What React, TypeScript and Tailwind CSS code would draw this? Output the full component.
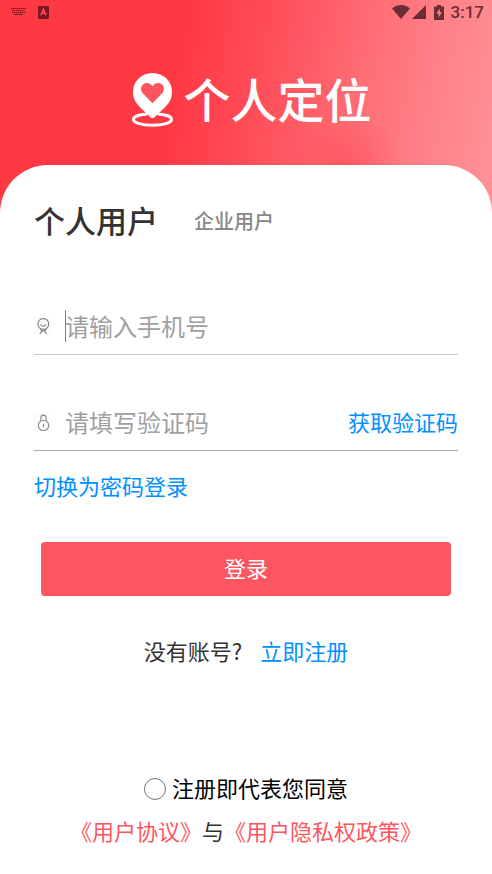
import { useState } from 'react'

const tabs = [
  { id: 'personal', label: '个人用户' },
  { id: 'company', label: '企业用户' },
]

function StatusBar() {
  return (
    <div className="flex h-6 items-center justify-between pl-[11px] pr-2 text-[#6b2c33]">
      <div className="flex items-center gap-3 text-[#7a1720]">
        <svg width="15" height="8" viewBox="0 0 15 8" fill="none" stroke="currentColor">
          <path d="M0 .5h15M1 2.500h13M1 4.500h13" strokeWidth="1" strokeDasharray="1.500 .500" />
          <path d="M3 6.500h9" strokeWidth="1" />
        </svg>
        <svg width="11" height="13" viewBox="0 0 11 13">
          <rect width="11" height="13" rx="1" fill="currentColor" />
          <path d="M2.900 9.300 5.500 3.300 8.100 9.300M4 7.300h3" fill="none" stroke="#ff4a55" strokeWidth="1.600" />
        </svg>
      </div>
      <div className="flex items-center">
        <svg width="18" height="14" viewBox="0 0 18 14" fill="currentColor">
          <path d="M0 3.5C5-1.1 13-1.1 18 3.5L9 14z" />
        </svg>
        <svg className="ml-0.5" width="14" height="14" viewBox="0 0 14 14" fill="currentColor">
          <path d="M14 0v14H0z" />
        </svg>
        <svg className="ml-2" width="10" height="15" viewBox="0 0 10 15">
          <path d="M3 0h4v1.5h3V15H0V1.500h3z" fill="currentColor" />
          <path d="M5.800 3.500 2.300 8.600h2.300v3.800l3.300-5.200H5.800z" fill="#ff868b" />
        </svg>
        <span className="ml-[7px] font-[Roboto,sans-serif] text-[17px] font-medium leading-6">3:17</span>
      </div>
    </div>
  )
}

function Logo() {
  return (
    <svg width="42" height="56" viewBox="0 0 42 56" fill="none">
      <path d="M14 42.3C6 42.8 1.500 44.900 1.500 47.500c0 3.300 8.500 5.800 19 5.800s19-2.500 19-5.800c0-2.600-4.500-4.700-12.500-5.200" stroke="#fff" strokeWidth="3" strokeLinecap="round" />
      <path d="M20.500 1C9.500 1 1 9.300 1 20c0 6.500 2.800 11 7 15.200l10.500 10.100a3 3 0 0 0 4 0L33 35.200c4.200-4.200 7-8.700 7-15.200C40 9.300 31.500 1 20.500 1z" fill="#fff" />
      <path d="M20.500 31.300 11 21.500c-2.800-3-2.500-7 .2-9.200 2.800-2.200 6.900-1.600 9.300 1.900 2.400-3.500 6.500-4.100 9.300-1.900 2.700 2.200 3 6.200.2 9.200z" fill="#fd5560" />
    </svg>
  )
}

function PhoneIcon() {
  return (
    <svg className="mr-[13px] shrink-0" width="18" height="18" viewBox="0 0 18 18" fill="none" stroke="#808080" strokeWidth="1.100">
      <rect width="18" height="18" fill="#fbfbfb" stroke="none" />
      <circle cx="9.300" cy="7" r="5.400" />
      <path d="M6.700 7.500c.8 2.300 4.400 2.300 5.200 0M6.200 12.300l2 1.600-2.400 3.100M12.400 12.300l-2 1.600 2.400 3.100M8.200 13.900h2.200" />
    </svg>
  )
}

function LockIcon() {
  return (
    <svg className="mr-[13px] shrink-0" width="18" height="18" viewBox="0 0 18 18" fill="none" stroke="#888" strokeWidth="1.100">
      <rect width="18" height="18" fill="#fbfbfb" stroke="none" />
      <circle cx="9.500" cy="12.500" r="5.200" />
      <path d="M6.900 8.200V4.800c0-3.600 5.200-3.600 5.200 0v3.400M9.500 11v3" />
    </svg>
  )
}

export default function App() {
  const [activeTab, setActiveTab] = useState('personal')
  const [phone, setPhone] = useState('')

  return (
    <div className="flex min-h-screen flex-col bg-[#ff3a45] bg-[radial-gradient(ellipse_60px_50px_at_70%_165px,#ff485288,#ff485200),linear-gradient(100deg,#ff3944_0%,#ff3944_36%,#ff505b_53%,#ff6c74_70%,#ff8188_84%,#ff9499_100%)] bg-[length:100%_240px] bg-no-repeat font-['Noto_Sans_CJK_SC',sans-serif] text-[22px] leading-8">
      <header>
        <StatusBar />
        <div className="flex items-start justify-center gap-[10px] pb-[37px] pl-[11px] pt-12">
          <Logo />
          <h1 className="text-[47px] font-medium leading-[52px] text-white">个人定位</h1>
        </div>
      </header>

      <main className="flex-1 rounded-t-[48px] bg-white px-[34px] pb-5 pt-8">
        <div className="flex h-12 items-center gap-9">
          {tabs.map((tab) => (
            <button
              key={tab.id}
              type="button"
              onClick={() => setActiveTab(tab.id)}
              className={
                activeTab === tab.id
                  ? 'pb-0.5 text-[31px] font-medium leading-[46px] text-[#333]'
                  : 'text-[20px] font-medium leading-[48px] text-[#888]'
              }
            >
              {tab.label}
            </button>
          ))}
        </div>

        <form onSubmit={(e) => e.preventDefault()}>
          <div className="mt-[54px] flex h-14 items-center border-b border-[#c8c8c8] pb-0.5">
            <PhoneIcon />
            <div className="relative min-w-0 flex-1">
              <input
                type="tel"
                aria-label="手机号"
                placeholder="请输入手机号"
                value={phone}
                onChange={(e) => setPhone(e.target.value)}
                className="block h-9 w-full bg-transparent text-[24px] text-[#333] outline-none placeholder:text-[#a0a0a0]"
              />
              {!phone && <span className="absolute left-0 top-0.5 h-8 w-px bg-[#f04f5b]" />}
            </div>
          </div>

          <div className="mt-10 flex h-14 items-center border-b border-[#aaa] pb-0.5">
            <LockIcon />
            <input
              type="text"
              aria-label="验证码"
              placeholder="请填写验证码"
              className="block h-9 w-0 min-w-0 flex-1 bg-transparent text-[24px] text-[#333] outline-none placeholder:text-[#a0a0a0]"
            />
            <button type="button" className="shrink-0 pb-0.5 text-[#0090ff]">获取验证码</button>
          </div>

          <a href="#password" className="mt-[18px] block w-fit text-[#0090ff]">切换为密码登录</a>

          <div className="mt-[41px] px-[7px]">
            <button type="submit" className="h-[54px] w-full rounded bg-[#fe5661] pb-1 text-white">登录</button>
          </div>
        </form>

        <p className="mt-[38px] flex justify-center text-[#333]">
          没有账号?
          <a href="#register" className="ml-[18px] text-[#0090ff]">立即注册</a>
        </p>

        <label className="mt-[109px] flex items-center justify-center gap-1.5 text-black">
          <input type="checkbox" className="size-[22px] appearance-none rounded-full border border-[#777] checked:bg-[#fe5661]" />
          <span className="-my-1 pb-1">注册即代表您同意</span>
        </label>
        <p className="mt-[11px] text-center text-[#333]">
          <a href="#terms" className="text-[#fe5661]">《用户协议》</a>
          与
          <a href="#privacy" className="text-[#fe5661]">《用户隐私权政策》</a>
        </p>
      </main>
    </div>
  )
}
